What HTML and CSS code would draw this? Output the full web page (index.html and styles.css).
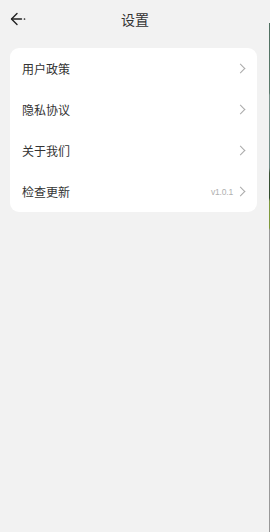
FILE: index.html
```html
<!DOCTYPE html>
<html lang="zh">
<head>
<meta charset="utf-8">
<link rel="stylesheet" href="styles.css">
</head>
<body>
<div class="page">
  <header class="topbar">
    <svg class="back" width="18" height="14" viewBox="0 0 18 14">
      <path d="M7 1.5 L1.5 7 L7 12.5" fill="none" stroke="#222" stroke-width="1.4" stroke-linecap="round" stroke-linejoin="round"/>
      <path d="M1.8 7 H11.5" stroke="#222" stroke-width="1.4" stroke-linecap="round"/>
      <circle cx="14.5" cy="7" r="0.85" fill="#222"/>
    </svg>
    <h1 class="title">设置</h1>
  </header>
  <div class="card">
    <div class="row"><span class="label">用户政策</span><span class="right"><span class="chev"></span></span></div>
    <div class="row"><span class="label">隐私协议</span><span class="right"><span class="chev"></span></span></div>
    <div class="row"><span class="label">关于我们</span><span class="right"><span class="chev"></span></span></div>
    <div class="row"><span class="label">检查更新</span><span class="right"><span class="ver">v1.0.1</span><span class="chev"></span></span></div>
  </div>
  <div class="edge"></div>
</div>
</body>
</html>
```
FILE: styles.css
```css
html, body { margin: 0; padding: 0; }
body {
  background: #f2f2f2;
  font-family: "Noto Sans CJK SC", "Noto Sans", sans-serif;
  color: #333;
}
.page {
  position: relative;
  width: 270px;
  height: 532px;
  overflow: hidden;
}
.topbar {
  position: relative;
  height: 38px;
  display: flex;
  align-items: center;
  justify-content: center;
}
.back {
  position: absolute;
  left: 10px;
  top: 12px;
}
.title {
  margin: 0;
  font-size: 14px;
  font-weight: 400;
  color: #333;
  line-height: 1;
}
.card {
  margin: 10px 13px 0 10px;
  background: #fff;
  border-radius: 9px;
  display: flex;
  flex-direction: column;
}
.row {
  height: 41px;
  display: flex;
  align-items: center;
  justify-content: space-between;
  padding: 0 12px;
}
.label {
  font-size: 12px;
  color: #333;
}
.right {
  display: flex;
  align-items: center;
  gap: 4px;
}
.ver {
  font-size: 8.5px;
  color: #b0b0b0;
  font-family: "Liberation Sans", "Noto Sans", sans-serif;
  letter-spacing: -0.2px;
}
.chev {
  width: 6px;
  height: 6px;
  border-top: 1px solid #aaa;
  border-right: 1px solid #aaa;
  transform: rotate(45deg);
  margin-right: 1px;
}
.edge {
  position: absolute;
  right: 0;
  top: 23px;
  bottom: 0;
  width: 1px;
  background: linear-gradient(#4f6f60 0, #5a7a6c 70px, #7a948c 72px, #6f8a84 145px, #3a5234 150px, #2f4a2a 175px, #7e9a40 178px, #809a3c 205px, #999 207px, #999 100%);
}
```
